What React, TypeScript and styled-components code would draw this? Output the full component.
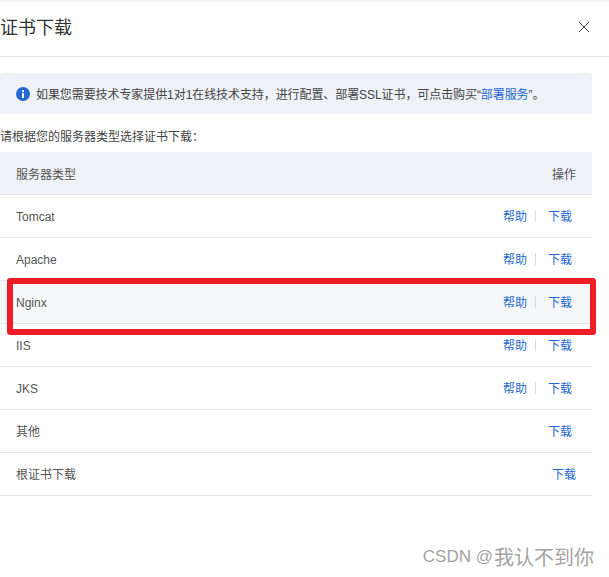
import styled, { createGlobalStyle } from 'styled-components';

const GlobalStyle = createGlobalStyle`
  html, body {
    margin: 0;
    padding: 0;
    background: #fff;
  }
  body {
    font-family: "Liberation Sans", "Noto Sans CJK SC", sans-serif;
    color: #333;
  }
`

const Page = styled.div`
  position: relative;
  width: 609px;
  height: 577px;
  overflow: hidden;
  border-top: 2px solid #f5f5f5;
  box-sizing: border-box;
`

const Header = styled.header`
  height: 54px;
  box-sizing: content-box;
  border-bottom: 1px solid #e5e5e5;
  display: flex;
  align-items: center;
  justify-content: space-between;
  padding-right: 19px;
`

const Title = styled.h2`
  margin: 0 0 7px;
  font-size: 18px;
  font-weight: 400;
  color: #333;
`

const CloseIcon = styled.svg`
  margin-bottom: 4px;
`

const Body = styled.div`
  width: 592px;
  padding-top: 16px;
`

const Notice = styled.div`
  height: 41px;
  background: #eef1f6;
  border-radius: 2px;
  display: flex;
  align-items: center;
  gap: 6px;
  padding-left: 16px;
  font-size: 12px;
  color: #444;
  letter-spacing: -0.08px;
`

const Link = styled.span`
  color: #2468d0;
`

const Hint = styled.p`
  margin: 0;
  height: 38px;
  line-height: 46px;
  font-size: 12px;
  color: #444;
`

const TableHead = styled.div`
  height: 42px;
  background: #eef1f6;
  border-bottom: 1px solid #e5e5e5;
  display: flex;
  align-items: center;
  justify-content: space-between;
  padding: 0 16px;
  font-size: 12px;
  color: #555;
`

const Row = styled.div<{ $active?: boolean }>`
  height: 42px;
  background: ${(props) => (props.$active ? '#f6f7f9' : '#fff')};
  border-bottom: 1px solid #e5e5e5;
  display: flex;
  align-items: center;
  justify-content: space-between;
  padding: 0 16px;
  font-size: 12px;
  color: #555;
`

const Name = styled.span<{ $latin?: boolean }>`
  margin: ${(props) => (props.$latin ? '2px 0 0' : '0 0 2px')};
`

const Actions = styled.div<{ $flush?: boolean }>`
  display: flex;
  align-items: center;
  color: #2468d0;
  padding-right: ${(props) => (props.$flush ? '0' : '4px')};
  margin-bottom: 1px;
`

const Divider = styled.i`
  width: 1px;
  height: 12px;
  background: #d8dbe0;
  margin: 0 12px 0 8px;
`

const Highlight = styled.div`
  position: absolute;
  left: 7px;
  top: 276px;
  width: 589px;
  height: 57px;
  box-sizing: border-box;
  border: 6px solid #ee1c25;
  border-radius: 3px;
`

const Watermark = styled.div`
  position: absolute;
  right: 15px;
  top: 540px;
  display: flex;
  align-items: center;
  gap: 1px;
  font-size: 17px;
  color: #a3a3a3;
`

const WatermarkName = styled.span`
  font-size: 20px;
`

const rows = [
  { name: 'Tomcat', help: true, latin: true },
  { name: 'Apache', help: true, latin: true },
  { name: 'Nginx', help: true, latin: true, active: true },
  { name: 'IIS', help: true, latin: true },
  { name: 'JKS', help: true, latin: true },
  { name: '其他', help: false },
  { name: '根证书下载', help: false, flush: true },
];

export default function App() {
  return (
    <Page>
      <GlobalStyle />
      <Header>
        <Title>证书下载</Title>
        <CloseIcon width='12' height='12' viewBox='0 0 12 12'>
          <path d='M1 1 L11 11 M11 1 L1 11' stroke='#444' strokeWidth='1' fill='none' />
        </CloseIcon>
      </Header>
      <Body>
        <Notice>
          <svg width='14' height='14' viewBox='0 0 14 14'>
            <circle cx='7' cy='7' r='7' fill='#2468d0' />
            <rect x='6' y='6' width='2' height='5' fill='#fff' />
            <rect x='6' y='3' width='2' height='2' fill='#fff' />
          </svg>
          <span>
            如果您需要技术专家提供1对1在线技术支持，进行配置、部署SSL证书，可点击购买“<Link>部署服务</Link>”。
          </span>
        </Notice>
        <Hint>请根据您的服务器类型选择证书下载：</Hint>
        <TableHead>
          <span>服务器类型</span>
          <span>操作</span>
        </TableHead>
        {rows.map((row) => (
          <Row key={row.name} $active={row.active}>
            <Name $latin={row.latin}>{row.name}</Name>
            <Actions $flush={row.flush}>
              {row.help && (
                <>
                  <span>帮助</span>
                  <Divider />
                </>
              )}
              <span>下载</span>
            </Actions>
          </Row>
        ))}
      </Body>
      <Highlight />
      <Watermark>
        <span>CSDN @</span>
        <WatermarkName>我认不到你</WatermarkName>
      </Watermark>
    </Page>
  )
}
